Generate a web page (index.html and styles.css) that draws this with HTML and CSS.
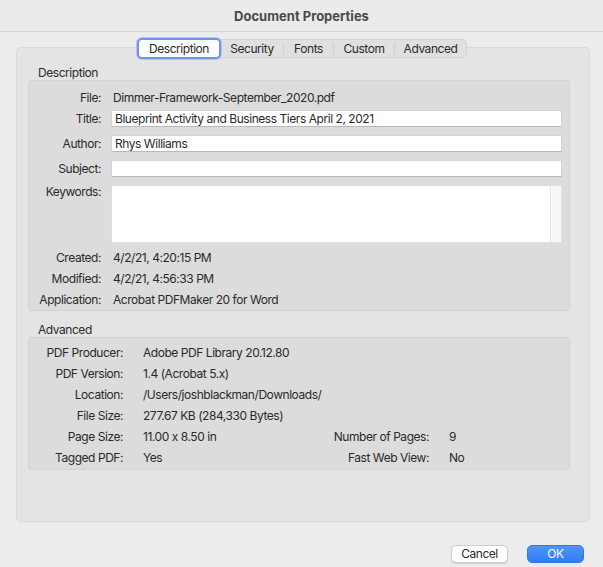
FILE: index.html
```html
<!DOCTYPE html>
<html>
<head>
<meta charset="utf-8">
<link rel="stylesheet" href="styles.css">
</head>
<body>
<div class="window">
  <div class="titlebar">Document Properties</div>
  <div class="tabbox">
    <div class="tabs">
      <div class="tab selected">Description</div>
      <div class="tab t-security">Security</div>
      <div class="sep"></div>
      <div class="tab t-fonts">Fonts</div>
      <div class="sep"></div>
      <div class="tab t-custom">Custom</div>
      <div class="sep"></div>
      <div class="tab t-advanced">Advanced</div>
    </div>
    <div class="section-label first">Description</div>
    <div class="group desc">
      <div class="row file"><span class="lbl">File:</span><span class="val">Dimmer-Framework-September_2020.pdf</span></div>
      <div class="row field first-field"><span class="lbl">Title:</span><div class="input">Blueprint Activity and Business Tiers April 2, 2021</div></div>
      <div class="row field"><span class="lbl">Author:</span><div class="input">Rhys Williams</div></div>
      <div class="row field"><span class="lbl">Subject:</span><div class="input"></div></div>
      <div class="row keywords"><span class="lbl">Keywords:</span><div class="textarea"><div class="scroll"></div></div></div>
      <div class="row text first-text"><span class="lbl">Created:</span><span class="val">4/2/21, 4:20:15 PM</span></div>
      <div class="row text"><span class="lbl">Modified:</span><span class="val">4/2/21, 4:56:33 PM</span></div>
      <div class="row text"><span class="lbl">Application:</span><span class="val">Acrobat PDFMaker 20 for Word</span></div>
    </div>
    <div class="section-label second">Advanced</div>
    <div class="group adv">
      <span class="albl">PDF Producer:</span><span class="aval wide">Adobe PDF Library 20.12.80</span>
      <span class="albl">PDF Version:</span><span class="aval wide">1.4 (Acrobat 5.x)</span>
      <span class="albl">Location:</span><span class="aval wide">/Users/joshblackman/Downloads/</span>
      <span class="albl">File Size:</span><span class="aval wide">277.67 KB (284,330 Bytes)</span>
      <span class="albl">Page Size:</span><span class="aval">11.00 x 8.50 in</span><span class="albl">Number of Pages:</span><span class="aval">9</span>
      <span class="albl">Tagged PDF:</span><span class="aval">Yes</span><span class="albl">Fast Web View:</span><span class="aval">No</span>
    </div>
  </div>
  <div class="buttons">
    <div class="btn cancel">Cancel</div>
    <div class="btn ok">OK</div>
  </div>
</div>
</body>
</html>
```

FILE: styles.css
```css
* { box-sizing: border-box; }
html, body { margin: 0; padding: 0; }
body {
  width: 603px;
  height: 567px;
  background: #ececec;
  font-family: "Inter", "Liberation Sans", sans-serif;
  font-size: 12px;
  letter-spacing: -0.45px;
  font-feature-settings: "calt" 0;
  color: #2a2a2a;
  overflow: hidden;
}
.window { width: 603px; height: 567px; }
.titlebar {
  height: 32px;
  line-height: 32px;
  text-align: center;
  font-weight: 700;
  font-size: 13px;
  letter-spacing: 0;
  color: #4a4a4a;
  background: #ebebeb;
  border-bottom: 1px solid #d6d6d6;
}
.tabbox {
  margin: 15px 13px 0 16px;
  height: 475px;
  background: #e4e4e4;
  border: 1px solid #d9d9d9;
  border-radius: 5px;
  padding: 0 19px 0 11px;
}
.tabs {
  display: flex;
  align-items: center;
  width: 330px;
  height: 19px;
  margin: -9px 0 0 109px;
  background: #e0e0e0;
  border: 1px solid #d4d4d4;
  border-radius: 5px;
}
.tab {
  height: 17px;
  line-height: 17px;
  text-align: center;
  color: #2a2a2a;
  flex: none;
}
.t-security { width: 62px; }
.t-fonts { width: 49px; }
.t-custom { width: 60px; }
.t-advanced { width: 71px; }
.tab.selected {
  width: 84px;
  margin-left: -1px;
  height: 21px;
  line-height: 17px;
  background: #ffffff;
  border: 2px solid #7093ee;
  border-radius: 5px;
  box-shadow: 0 0 0 1px #b3c4f3;
}
.sep {
  width: 1px;
  height: 11px;
  background: #cfcfcf;
  flex: none;
}
.section-label {
  height: 14px;
  line-height: 14px;
  padding-left: 10px;
}
.section-label.first { margin-top: 8px; }
.section-label.second { margin-top: 12px; }
.group {
  background: #dcdcdc;
  border: 1px solid #d3d3d3;
  border-radius: 4px;
}
.desc { height: 231px; }
.row { display: flex; align-items: center; }
.lbl {
  width: 72px;
  text-align: right;
  flex: none;
  white-space: nowrap;
}
.val { margin-left: 12px; white-space: nowrap; }
.row.file { margin-top: 6px; height: 20px; }
.row.field { margin-top: 8px; height: 17px; }
.row.field.first-field { margin-top: 3px; }
.input {
  margin-left: 10px;
  width: 451px;
  height: 17px;
  line-height: 16px;
  background: #ffffff;
  border: 1px solid #d4d4d4;
  border-bottom-color: #b9b9b9;
  padding-left: 3px;
  white-space: nowrap;
}
.row.keywords { margin-top: 8px; height: 58px; align-items: flex-start; }
.row.keywords .lbl { line-height: 14px; }
.textarea {
  margin-left: 10px;
  width: 451px;
  height: 58px;
  background: #ffffff;
  border: 1px solid #e0e0e0;
  display: flex;
  justify-content: flex-end;
}
.scroll {
  width: 11px;
  height: 100%;
  background: #f8f8f8;
  border-left: 1px solid #e6e6e6;
}
.row.text { height: 21px; }
.row.text.first-text { margin-top: 4px; }
.adv {
  height: 133px;
  display: grid;
  grid-template-columns: 94px 166px 100px auto;
  grid-auto-rows: 21px;
  column-gap: 20px;
  align-items: center;
  padding-top: 4px;
}
.albl { text-align: right; white-space: nowrap; }
.aval { white-space: nowrap; }
.aval.wide { grid-column: 2 / -1; }
.buttons {
  display: flex;
  justify-content: flex-end;
  gap: 19px;
  margin-top: 23px;
  padding-right: 19px;
}
.btn {
  width: 57px;
  height: 18px;
  line-height: 16px;
  text-align: center;
  border-radius: 5px;
}
.cancel {
  background: #ffffff;
  border: 1px solid #cdcdcd;
  box-shadow: 0 1px 1px rgba(0,0,0,0.12);
}
.ok {
  background: linear-gradient(#4f94f8, #2f7cf6);
  border: 1px solid #2f79f0;
  color: #ffffff;
}
```
